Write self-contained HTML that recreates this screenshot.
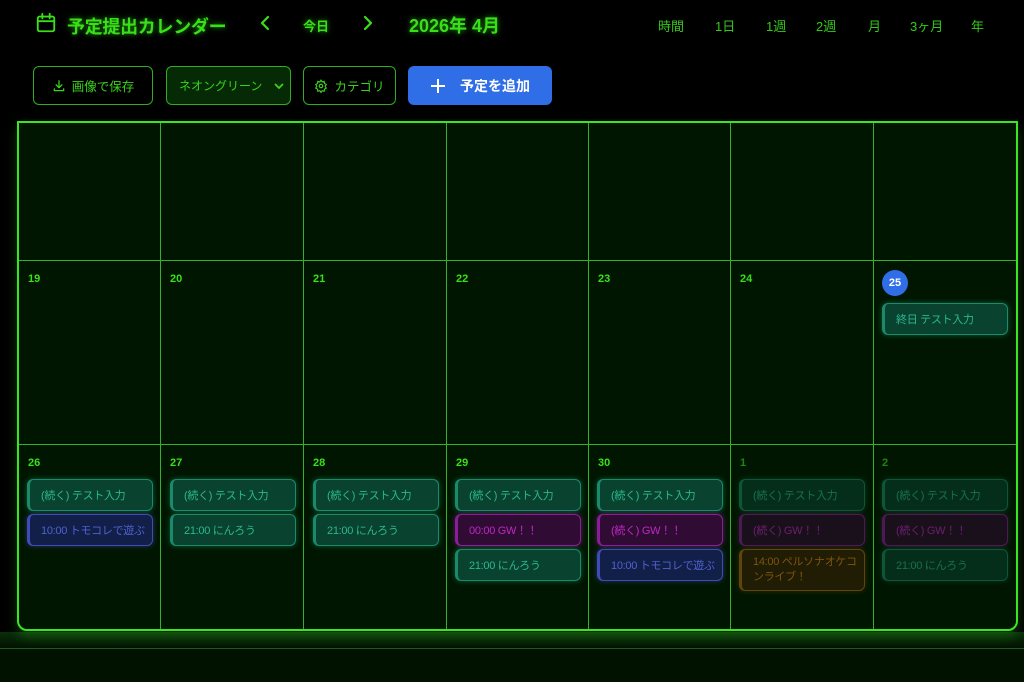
<!DOCTYPE html>
<html><head><meta charset="utf-8"><style>
*{margin:0;padding:0;box-sizing:border-box}
body{width:1024px;height:682px;overflow:hidden;background:#000;font-family:"Liberation Sans","Noto Sans CJK JP",sans-serif;position:relative;color:#39ff14}
.a{position:absolute;white-space:nowrap}
.g{color:#39e01a;text-shadow:0 0 6px rgba(57,255,20,.6)}
.btn{position:absolute;top:66px;height:39px;border:1px solid #2fae20;border-radius:6px;color:#3ad21c;font-size:12.5px;display:flex;align-items:center;justify-content:center;gap:6px;white-space:nowrap}
.cal{position:absolute;left:17px;top:121px;width:1001px;height:510px;background:#001600;border:2px solid #3ae523;border-radius:0 0 10px 10px;box-shadow:0 6px 12px rgba(57,229,35,.25);overflow:hidden}
.v{position:absolute;top:0;bottom:0;width:1px;background:#36b02a}
.h{position:absolute;left:0;right:0;height:1px;background:#36b02a}
.d{position:absolute;font-size:11px;font-weight:bold;color:#39e01a}
.e{position:absolute;width:126px;height:32px;border-radius:6px;font-size:11px;letter-spacing:-.3px;display:flex;align-items:center;padding-left:11px;border:1px solid;border-left:3px solid;white-space:nowrap;overflow:hidden}
.t{background:#0a4230;border-color:#1a8a6a;color:#2bb88d;box-shadow:0 0 6px rgba(31,200,150,.4)}
.p{background:#300c34;border-color:#8a1e98;color:#c026c6;box-shadow:0 0 6px rgba(210,40,220,.4)}
.b{background:#121f48;border-color:#3f4cb8;color:#4f62d0;box-shadow:0 0 6px rgba(90,100,230,.4)}
.o{background:#2a1e06;border-color:#7a500e;color:#9c6510;box-shadow:0 0 6px rgba(200,120,20,.3)}
.f{opacity:.55}
</style></head><body>
<svg class="a" style="left:35px;top:12px" width="22" height="22" viewBox="0 0 24 24" fill="none" stroke="#39e01a" stroke-width="2" stroke-linecap="round"><rect x="3" y="5" width="18" height="16" rx="2"/><path d="M3 10h18M8 2v5M16 2v5"/></svg>
<div class="a g" style="left:67px;top:13px;font-size:18px;font-weight:bold;letter-spacing:-.3px">予定提出カレンダー</div>
<svg class="a" style="left:258px;top:15px" width="14" height="16" viewBox="0 0 14 16" fill="none" stroke="#39e01a" stroke-width="2.2" stroke-linecap="round" stroke-linejoin="round"><path d="M10 2L4 8l6 6"/></svg>
<div class="a g" style="left:303px;top:16px;font-size:13px;font-weight:bold">今日</div>
<svg class="a" style="left:361px;top:15px" width="14" height="16" viewBox="0 0 14 16" fill="none" stroke="#39e01a" stroke-width="2.2" stroke-linecap="round" stroke-linejoin="round"><path d="M4 2l6 6-6 6"/></svg>
<div class="a g" style="left:409px;top:12px;font-size:18px;font-weight:bold">2026年 4月</div>
<div class="a" style="left:658px;top:16px;font-size:13px;color:#34c81a">時間</div>
<div class="a" style="left:715px;top:16px;font-size:13px;color:#34c81a">1日</div>
<div class="a" style="left:766px;top:16px;font-size:13px;color:#34c81a">1週</div>
<div class="a" style="left:816px;top:16px;font-size:13px;color:#34c81a">2週</div>
<div class="a" style="left:868px;top:16px;font-size:13px;color:#34c81a">月</div>
<div class="a" style="left:910px;top:16px;font-size:13px;color:#34c81a">3ヶ月</div>
<div class="a" style="left:971px;top:16px;font-size:13px;color:#34c81a">年</div>
<div class="btn" style="left:33px;width:120px"><svg width="14" height="14" viewBox="0 0 24 24" fill="none" stroke="#3ad21c" stroke-width="2.2" stroke-linecap="round" stroke-linejoin="round"><path d="M12 3v12M7 10l5 5 5-5M4 17v3h16v-3"/></svg>画像で保存</div>
<div class="btn" style="left:166px;width:125px;background:#052a05;justify-content:space-between;padding:0 6px 0 12px;font-size:12px">ネオングリーン<svg width="10" height="8" viewBox="0 0 10 8" fill="none" stroke="#3ad21c" stroke-width="1.8"><path d="M1 2l4 4 4-4"/></svg></div>
<div class="btn" style="left:303px;width:93px"><svg width="14" height="14" viewBox="0 0 24 24" fill="none" stroke="#3ad21c" stroke-width="2"><circle cx="12" cy="12" r="3"/><path d="M12 2l2 3 3.5-1 .5 3.5 3 2-2 3 2 3-3 2-.5 3.5-3.5-1-2 3-2-3-3.5 1-.5-3.5-3-2 2-3-2-3 3-2 .5-3.5 3.5 1z"/></svg>カテゴリ</div>
<div class="btn" style="left:408px;width:144px;background:#2f6ee6;border-color:#2f6ee6;color:#fff;font-weight:bold;font-size:14px;gap:14px"><svg width="16" height="16" viewBox="0 0 16 16" stroke="#fff" stroke-width="2"><path d="M8 1v14M1 8h14"/></svg>予定を追加</div>
<div class="a" style="left:0;top:632px;width:1024px;height:16px;background:linear-gradient(#0a2e0a,#021202)"></div>
<div class="a" style="left:0;top:648px;width:1024px;height:1px;background:#1f5a1f"></div>
<div class="a" style="left:0;top:649px;width:1024px;height:33px;background:#011201"></div>
<div class="cal">
<div class="v" style="left:141px"></div><div class="v" style="left:284px"></div><div class="v" style="left:427px"></div><div class="v" style="left:569px"></div><div class="v" style="left:711px"></div><div class="v" style="left:854px"></div>
<div class="h" style="top:137px"></div><div class="h" style="top:321px"></div>
<div class="d" style="left:9px;top:150px">19</div><div class="d" style="left:151px;top:150px">20</div><div class="d" style="left:294px;top:150px">21</div><div class="d" style="left:437px;top:150px">22</div><div class="d" style="left:579px;top:150px">23</div><div class="d" style="left:721px;top:150px">24</div>
<div class="a" style="left:863px;top:147px;width:26px;height:26px;border-radius:50%;background:#2f6ee6;color:#fff;font-size:11px;font-weight:bold;display:flex;align-items:center;justify-content:center">25</div>
<div class="e t" style="left:863px;top:180px">終日 テスト入力</div>
<div class="d" style="left:9px;top:334px">26</div><div class="d" style="left:151px;top:334px">27</div><div class="d" style="left:294px;top:334px">28</div><div class="d" style="left:437px;top:334px">29</div><div class="d" style="left:579px;top:334px">30</div><div class="d f" style="left:721px;top:334px">1</div><div class="d f" style="left:863px;top:334px">2</div>
<div class="e t" style="left:8px;top:356px">(続く) テスト入力</div><div class="e b" style="left:8px;top:391px">10:00 トモコレで遊ぶ</div>
<div class="e t" style="left:151px;top:356px">(続く) テスト入力</div><div class="e t" style="left:151px;top:391px">21:00 にんろう</div>
<div class="e t" style="left:294px;top:356px">(続く) テスト入力</div><div class="e t" style="left:294px;top:391px">21:00 にんろう</div>
<div class="e t" style="left:436px;top:356px">(続く) テスト入力</div><div class="e p" style="left:436px;top:391px">00:00 GW！！</div><div class="e t" style="left:436px;top:426px">21:00 にんろう</div>
<div class="e t" style="left:578px;top:356px">(続く) テスト入力</div><div class="e p" style="left:578px;top:391px">(続く) GW！！</div><div class="e b" style="left:578px;top:426px">10:00 トモコレで遊ぶ</div>
<div class="e t f" style="left:720px;top:356px">(続く) テスト入力</div><div class="e p f" style="left:720px;top:391px">(続く) GW！！</div><div class="e o" style="left:720px;top:426px;height:42px;white-space:normal;line-height:15px;opacity:.8">14:00 ペルソナオケコンライブ！</div>
<div class="e t f" style="left:863px;top:356px">(続く) テスト入力</div><div class="e p f" style="left:863px;top:391px">(続く) GW！！</div><div class="e t f" style="left:863px;top:426px">21:00 にんろう</div>
</div>
</body></html>
